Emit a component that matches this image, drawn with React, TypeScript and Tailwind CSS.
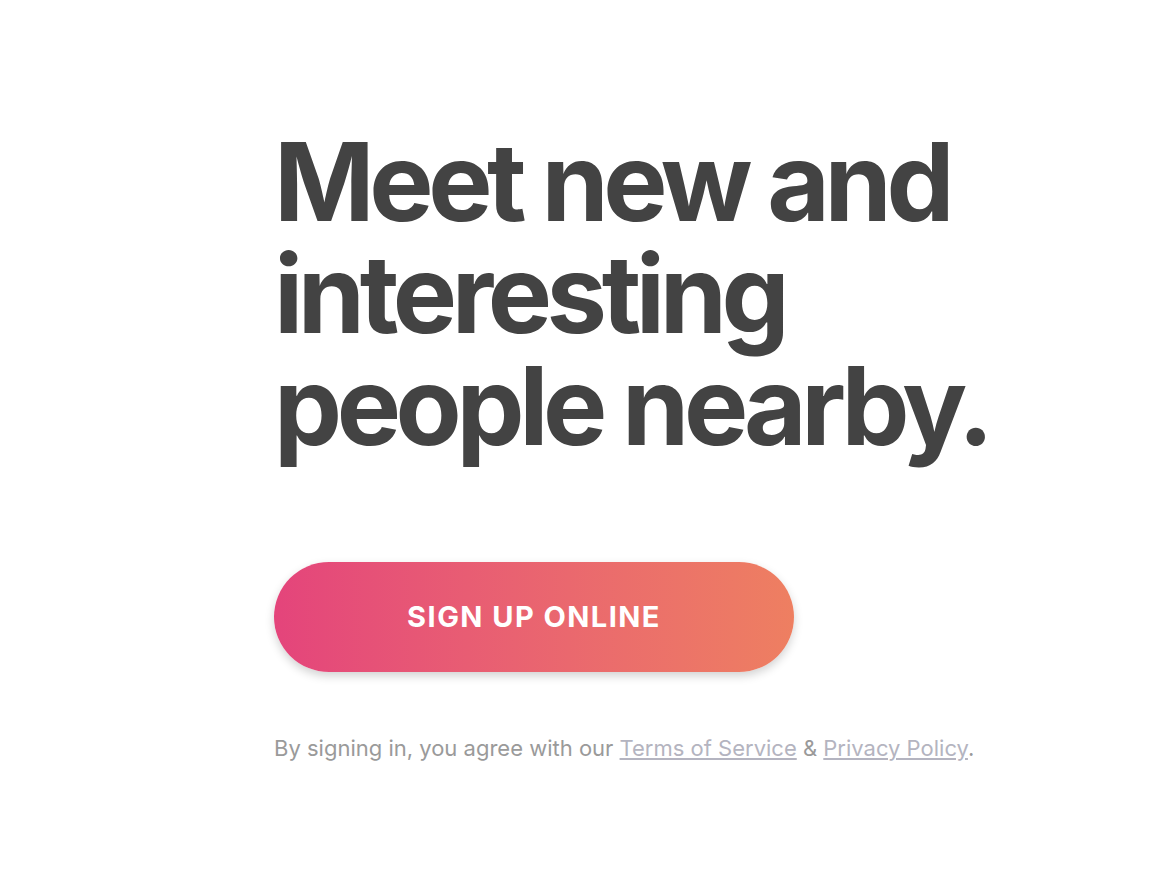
export default function App() {
  return (
    <main className="min-h-screen bg-white font-['Inter',sans-serif]">
      <div className="pl-[274px] pt-[126px]">
        {/* Headline */}
        <h1 className="text-[108px] font-bold leading-[112px] tracking-[-0.05em] text-[#434343]">
          Meet new and
          <br />
          interesting
          <br />
          people nearby.
        </h1>

        {/* Call to action */}
        <button
          type="button"
          className="mt-[100px] flex h-[110px] w-[520px] items-center justify-center rounded-full bg-gradient-to-r from-[#e4447b] to-[#ee7f61] text-[29px] font-bold tracking-[0.05em] text-white shadow-[0_4px_10px_rgba(0,0,0,0.18)]"
        >
          SIGN UP ONLINE
        </button>

        {/* Legal */}
        <p className="mt-[60px] text-[22px] text-[#9a9a9a]">
          By signing in, you agree with our{" "}
          <a href="#" className="text-[#b4b4c0] underline underline-offset-2">
            Terms of Service
          </a>{" "}
          &amp;{" "}
          <a href="#" className="text-[#b4b4c0] underline underline-offset-2">
            Privacy Policy
          </a>
          .
        </p>
      </div>
    </main>
  );
}
